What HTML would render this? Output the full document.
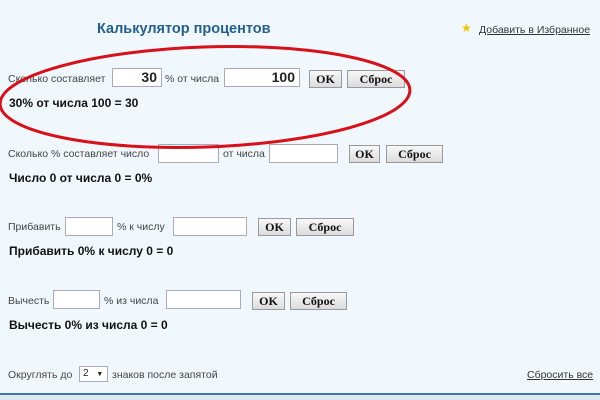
<!DOCTYPE html><html><head><meta charset="utf-8"><style>
body{margin:0;width:600px;height:400px;background:#f1f8fd;font-family:"Liberation Sans",sans-serif;position:relative;overflow:hidden;color:#222}
.a{position:absolute;white-space:nowrap}
.l{font-size:10.5px;color:#444}
.i{position:absolute;height:19px;background:#fff;border:1px solid #aab;box-sizing:border-box;font:bold 14px "Liberation Sans",sans-serif;text-align:right;padding-right:4px;line-height:17px}
.b{position:absolute;height:18px;background:linear-gradient(#f8f8f8,#dcdcdc);border:1px solid #999;box-sizing:border-box;font:bold 12px "Liberation Serif",serif;text-align:center;line-height:16px;color:#111}
.r{font-size:12px;font-weight:bold;color:#111}
</style></head><body>
<div class="a" style="left:97px;top:21px;font-size:14.5px;font-weight:bold;color:#23608f">Калькулятор процентов</div>
<div class="a" style="left:461px;top:21px;color:#f0c800;font-size:12px">★</div>
<div class="a l" style="left:479px;top:24px;text-decoration:underline;color:#333">Добавить в Избранное</div>

<div class="a l" style="left:8px;top:73px">Сколько составляет</div>
<div class="i" style="left:112px;top:68px;width:50px">30</div>
<div class="a l" style="left:165px;top:73px">% от числа</div>
<div class="i" style="left:224px;top:68px;width:76px">100</div>
<div class="b" style="left:309px;top:70px;width:33px">OK</div>
<div class="b" style="left:347px;top:70px;width:58px">Сброс</div>
<div class="a r" style="left:9px;top:96px">30% от числа 100 = 30</div>

<div class="a l" style="left:8px;top:148px">Сколько % составляет число</div>
<div class="i" style="left:158px;top:144px;width:61px"></div>
<div class="a l" style="left:223px;top:148px">от числа</div>
<div class="i" style="left:269px;top:144px;width:69px"></div>
<div class="b" style="left:349px;top:145px;width:31px">OK</div>
<div class="b" style="left:386px;top:145px;width:57px">Сброс</div>
<div class="a r" style="left:9px;top:171px">Число 0 от числа 0 = 0%</div>

<div class="a l" style="left:8px;top:221px">Прибавить</div>
<div class="i" style="left:65px;top:217px;width:48px"></div>
<div class="a l" style="left:117px;top:221px">% к числу</div>
<div class="i" style="left:173px;top:217px;width:74px"></div>
<div class="b" style="left:258px;top:218px;width:33px">OK</div>
<div class="b" style="left:296px;top:218px;width:58px">Сброс</div>
<div class="a r" style="left:9px;top:244px">Прибавить 0% к числу 0 = 0</div>

<div class="a l" style="left:8px;top:295px">Вычесть</div>
<div class="i" style="left:53px;top:290px;width:47px"></div>
<div class="a l" style="left:104px;top:295px">% из числа</div>
<div class="i" style="left:166px;top:290px;width:75px"></div>
<div class="b" style="left:252px;top:292px;width:33px">OK</div>
<div class="b" style="left:290px;top:292px;width:57px">Сброс</div>
<div class="a r" style="left:9px;top:318px">Вычесть 0% из числа 0 = 0</div>

<div class="a l" style="left:8px;top:369px">Округлять до</div>
<div class="a" style="left:79px;top:366px;width:29px;height:16px;border:1px solid #aab;box-sizing:border-box;background:#fff;font-size:10px;line-height:14px;padding-left:3px">2 <span style="font-size:7px;margin-left:5px">▼</span></div>
<div class="a l" style="left:112px;top:369px">знаков после запятой</div>
<div class="a l" style="left:527px;top:369px;text-decoration:underline;color:#333">Сбросить все</div>
<div class="a" style="left:0;top:393px;width:600px;height:2px;background:#3a78b5"></div>
<div class="a" style="left:0;top:395px;width:600px;height:5px;background:#dde9f3"></div>

<svg class="a" style="left:0;top:0" width="600" height="400"><ellipse cx="205" cy="97" rx="205" ry="50" transform="rotate(-2 205 97)" fill="none" stroke="#d8101a" stroke-width="3"/></svg>
</body></html>
